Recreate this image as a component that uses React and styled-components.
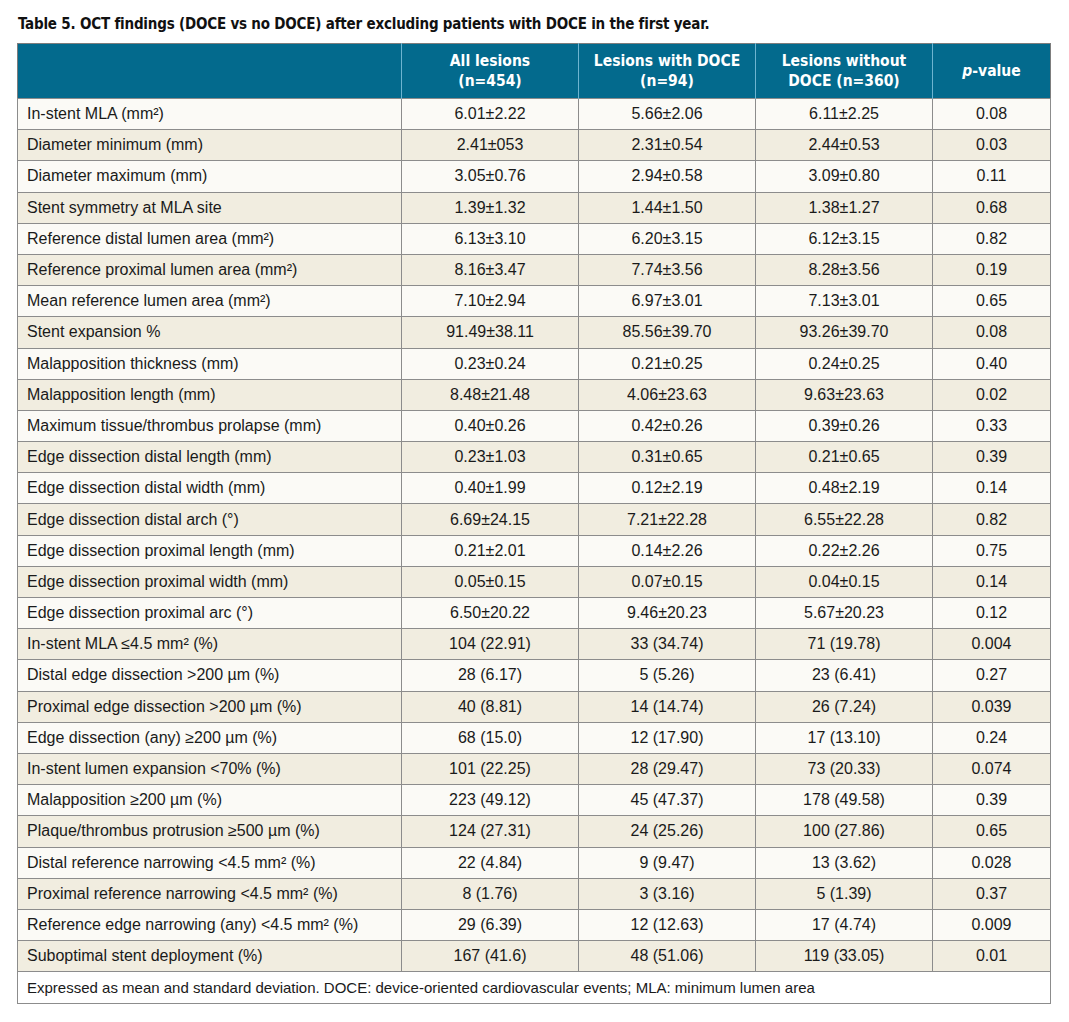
import React from "react";
import styled, { createGlobalStyle } from "styled-components";

const GlobalStyle = createGlobalStyle`
    html, body {
        margin: 0;
        padding: 0;
        background: #ffffff;
    }
    body {
        font-family: "Liberation Sans", Arial, sans-serif;
        color: #1c1c1c;
    }
`;

const rows = [
    ["In-stent MLA (mm²)", "6.01±2.22", "5.66±2.06", "6.11±2.25", "0.08"],
    ["Diameter minimum (mm)", "2.41±053", "2.31±0.54", "2.44±0.53", "0.03"],
    ["Diameter maximum (mm)", "3.05±0.76", "2.94±0.58", "3.09±0.80", "0.11"],
    ["Stent symmetry at MLA site", "1.39±1.32", "1.44±1.50", "1.38±1.27", "0.68"],
    ["Reference distal lumen area (mm²)", "6.13±3.10", "6.20±3.15", "6.12±3.15", "0.82"],
    ["Reference proximal lumen area (mm²)", "8.16±3.47", "7.74±3.56", "8.28±3.56", "0.19"],
    ["Mean reference lumen area (mm²)", "7.10±2.94", "6.97±3.01", "7.13±3.01", "0.65"],
    ["Stent expansion %", "91.49±38.11", "85.56±39.70", "93.26±39.70", "0.08"],
    ["Malapposition thickness (mm)", "0.23±0.24", "0.21±0.25", "0.24±0.25", "0.40"],
    ["Malapposition length (mm)", "8.48±21.48", "4.06±23.63", "9.63±23.63", "0.02"],
    ["Maximum tissue/thrombus prolapse (mm)", "0.40±0.26", "0.42±0.26", "0.39±0.26", "0.33"],
    ["Edge dissection distal length (mm)", "0.23±1.03", "0.31±0.65", "0.21±0.65", "0.39"],
    ["Edge dissection distal width (mm)", "0.40±1.99", "0.12±2.19", "0.48±2.19", "0.14"],
    ["Edge dissection distal arch (°)", "6.69±24.15", "7.21±22.28", "6.55±22.28", "0.82"],
    ["Edge dissection proximal length (mm)", "0.21±2.01", "0.14±2.26", "0.22±2.26", "0.75"],
    ["Edge dissection proximal width (mm)", "0.05±0.15", "0.07±0.15", "0.04±0.15", "0.14"],
    ["Edge dissection proximal arc (°)", "6.50±20.22", "9.46±20.23", "5.67±20.23", "0.12"],
    ["In-stent MLA ≤4.5 mm² (%)", "104 (22.91)", "33 (34.74)", "71 (19.78)", "0.004"],
    ["Distal edge dissection >200 µm (%)", "28 (6.17)", "5 (5.26)", "23 (6.41)", "0.27"],
    ["Proximal edge dissection >200 µm (%)", "40 (8.81)", "14 (14.74)", "26 (7.24)", "0.039"],
    ["Edge dissection (any) ≥200 µm (%)", "68 (15.0)", "12 (17.90)", "17 (13.10)", "0.24"],
    ["In-stent lumen expansion <70% (%)", "101 (22.25)", "28 (29.47)", "73 (20.33)", "0.074"],
    ["Malapposition ≥200 µm (%)", "223 (49.12)", "45 (47.37)", "178 (49.58)", "0.39"],
    ["Plaque/thrombus protrusion ≥500 µm (%)", "124 (27.31)", "24 (25.26)", "100 (27.86)", "0.65"],
    ["Distal reference narrowing <4.5 mm² (%)", "22 (4.84)", "9 (9.47)", "13 (3.62)", "0.028"],
    ["Proximal reference narrowing <4.5 mm² (%)", "8 (1.76)", "3 (3.16)", "5 (1.39)", "0.37"],
    ["Reference edge narrowing (any) <4.5 mm² (%)", "29 (6.39)", "12 (12.63)", "17 (4.74)", "0.009"],
    ["Suboptimal stent deployment (%)", "167 (41.6)", "48 (51.06)", "119 (33.05)", "0.01"],
];

export default function App() {
    return (
        <Page>
            <GlobalStyle />
            <Title>Table 5. OCT findings (DOCE vs no DOCE) after excluding patients with DOCE in the first year.</Title>
            <Table>
                <colgroup>
                    <col style={{ width: 384 }} />
                    <col style={{ width: 177 }} />
                    <col style={{ width: 177 }} />
                    <col style={{ width: 177 }} />
                    <col style={{ width: 118 }} />
                </colgroup>
                <thead>
                    <tr>
                        <HeadCell />
                        <HeadCell>All lesions<br />(n=454)</HeadCell>
                        <HeadCell>Lesions with DOCE<br />(n=94)</HeadCell>
                        <HeadCell>Lesions without<br />DOCE (n=360)</HeadCell>
                        <HeadCell><em>p</em>-value</HeadCell>
                    </tr>
                </thead>
                <tbody>
                    {rows.map((row, i) => (
                        <Row key={row[0]} $shaded={i % 2 === 1}>
                            {row.map((value, j) => (
                                <Cell key={j} $first={j === 0}>{value}</Cell>
                            ))}
                        </Row>
                    ))}
                    <tr>
                        <Note colSpan={5}>
                            Expressed as mean and standard deviation. DOCE: device-oriented cardiovascular events; MLA: minimum lumen area
                        </Note>
                    </tr>
                </tbody>
            </Table>
        </Page>
    );
}

const Page = styled.div`
    padding: 14px 0 0 17px;
    width: 1034px;
`;

const Title = styled.h1`
    margin: 0 0 9px 1px;
    font-family: "DejaVu Sans Condensed", "DejaVu Sans", sans-serif;
    font-weight: bold;
    font-size: 15px;
    line-height: 20px;
    letter-spacing: -0.2px;
    color: #111111;
    white-space: nowrap;
`;

const Table = styled.table`
    width: 1034px;
    border-collapse: collapse;
    table-layout: fixed;
    border: 1px solid #7d7d7d;
`;

const HeadCell = styled.th`
    height: 54px;
    padding: 0 6px;
    background: #036a8d;
    color: #ffffff;
    font-family: "DejaVu Sans Condensed", "DejaVu Sans", sans-serif;
    font-weight: bold;
    font-size: 15.5px;
    line-height: 20px;
    text-align: center;
    vertical-align: middle;
    border-left: 1px solid #6eb4d0;
    &:first-child {
        border-left: 0;
    }
    em {
        font-style: italic;
    }
`;

const Row = styled.tr`
    height: 31.2px;
    background: ${(p) => (p.$shaded ? "#f1ede0" : "#fbfaf6")};
`;

const Cell = styled.td`
    padding: 0 ${(p) => (p.$first ? "9px" : "4px")};
    border: 1px solid #8c8c8c;
    font-size: 16px;
    color: #1a1a1a;
    text-align: ${(p) => (p.$first ? "left" : "center")};
    vertical-align: middle;
    white-space: nowrap;
`;

const Note = styled.td`
    height: 31px;
    padding: 0 9px;
    background: #ffffff;
    border: 1px solid #8c8c8c;
    font-size: 15px;
    color: #1a1a1a;
    vertical-align: middle;
`;
